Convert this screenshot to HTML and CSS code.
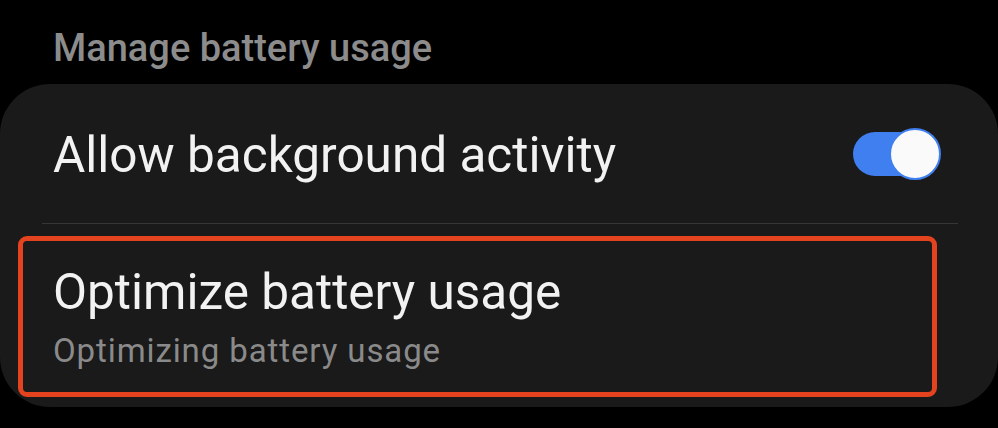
FILE: index.html
```html
<!DOCTYPE html>
<html lang="en">

<head>
    <meta charset="UTF-8">
    <meta name="viewport" content="width=device-width, initial-scale=1.0">
    <title>Battery</title>
    <link rel="stylesheet" href="styles.css">
</head>

<body>
    <h2 class="section-title">Manage battery usage</h2>

    <div class="card">
        <div class="row">
            <span class="row-title">Allow background activity</span>
            <div class="toggle">
                <div class="thumb"></div>
            </div>
        </div>

        <hr class="divider">

        <div class="row-box">
            <div class="row-title">Optimize battery usage</div>
            <div class="row-sub">Optimizing battery usage</div>
        </div>
    </div>
</body>

</html>
```

FILE: styles.css
```css
body {
    margin: 0;
    background-color: #000;
    font-family: Roboto, 'Noto Sans', sans-serif;
    width: 998px;
    height: 428px;
    overflow: hidden;
}

.section-title {
    margin: 0;
    padding: 26px 0 0 53px;
    height: 58px;
    font-size: 38px;
    font-weight: 500;
    color: #8c8c8c;
    line-height: 44px;
}

.card {
    background-color: #1a1a1a;
    border-radius: 50px;
    height: 323px;
}

.row {
    display: flex;
    align-items: center;
    justify-content: space-between;
    height: 139px;
    padding: 0 59px 0 53px;
}

.row-title {
    font-size: 49.5px;
    color: #f2f2f2;
    line-height: 60px;
    padding-top: 2px;
}

.toggle {
    position: relative;
    width: 86px;
    height: 44px;
    border-radius: 22px;
    background-color: #3f7ff0;
}

.thumb {
    position: absolute;
    right: -2px;
    top: -4px;
    width: 48px;
    height: 48px;
    border-radius: 50%;
    background-color: #fafafa;
    border: 2px solid #3f7ff0;
}

.divider {
    margin: 0 40px 0 42px;
    border: none;
    border-top: 1px solid #363636;
}

.row-box {
    margin: 12px 0 0 18px;
    width: 919px;
    height: 161px;
    box-sizing: border-box;
    border: 5px solid #e3441f;
    border-radius: 9px;
    padding: 21px 0 0 30px;
}

.row-box .row-title {
    padding-top: 0;
}

.row-sub {
    margin-top: 9px;
    font-size: 33px;
    letter-spacing: 0.9px;
    color: #8a8a8a;
    line-height: 40px;
}
```
